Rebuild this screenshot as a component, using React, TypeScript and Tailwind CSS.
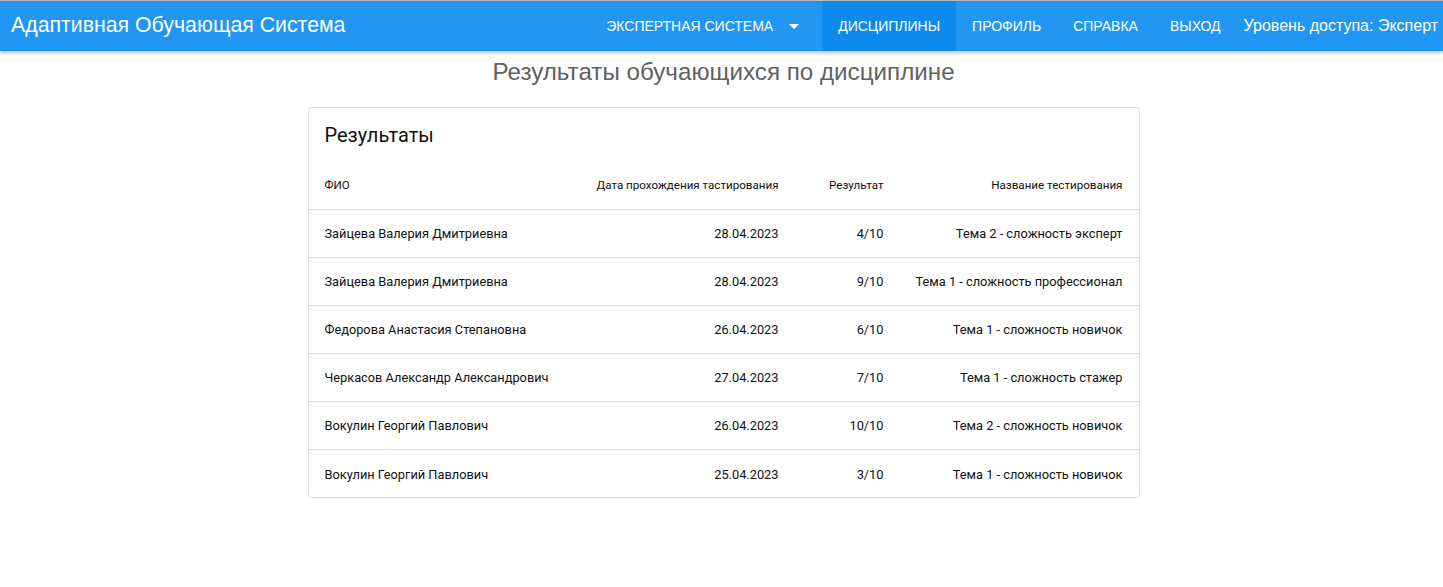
const rows = [
  { name: 'Зайцева Валерия Дмитриевна', date: '28.04.2023', result: '4/10', test: 'Тема 2 - сложность эксперт' },
  { name: 'Зайцева Валерия Дмитриевна', date: '28.04.2023', result: '9/10', test: 'Тема 1 - сложность профессионал' },
  { name: 'Федорова Анастасия Степановна', date: '26.04.2023', result: '6/10', test: 'Тема 1 - сложность новичок' },
  { name: 'Черкасов Александр Александрович', date: '27.04.2023', result: '7/10', test: 'Тема 1 - сложность стажер' },
  { name: 'Вокулин Георгий Павлович', date: '26.04.2023', result: '10/10', test: 'Тема 2 - сложность новичок' },
  { name: 'Вокулин Георгий Павлович', date: '25.04.2023', result: '3/10', test: 'Тема 1 - сложность новичок' },
];

const navItems = ['Профиль', 'Справка', 'Выход'];

export default function App() {
  return (
    <div className="min-h-[587px] bg-white font-['Liberation_Sans',Arial,sans-serif]">
      <header className="relative z-10 flex h-[51px] items-stretch border-t border-[#b9b9b9] bg-[#2196f3] text-white shadow-[0_2px_4px_rgba(0,0,0,0.25)]">
        <div className="flex flex-1 items-center pl-[11px] text-[21.3px]">Адаптивная Обучающая Система</div>
        <nav className="flex items-stretch text-[14px]">
          <div className="flex items-center gap-[16px] pl-[16px] pr-[23px] uppercase">
            <span>Экспертная система</span>
            <svg width="10" height="5" viewBox="0 0 10 5" className="fill-white">
              <path d="M0 0h10L5 5z" />
            </svg>
          </div>
          <div className="flex items-center bg-[#0d8aee] px-[16px] uppercase">Дисциплины</div>
          {navItems.map((item) => (
            <div key={item} className="flex items-center px-[16px] uppercase">
              {item}
            </div>
          ))}
        </nav>
        <div className="flex items-center pl-[7px] pr-[5px] text-[16px]">Уровень доступа: Эксперт</div>
      </header>

      <main className="ml-[4px] flex flex-col items-center">
        <h1 className="mt-[6px] text-[24.2px] leading-[30px] text-[#616161]">Результаты обучающихся по дисциплине</h1>

        <div className="mt-[20px] w-[832px] rounded-[4px] border border-[#dddddd] font-['Roboto',sans-serif] text-[#111]">
          <div className="px-[16px] pt-[15px] pb-[14px] text-[20px] leading-[24px]">Результаты</div>
          <table className="w-full table-fixed border-collapse text-[12.8px]">
            <colgroup>
              <col className="w-[272px]" />
              <col className="w-[214px]" />
              <col className="w-[105px]" />
              <col />
            </colgroup>
            <thead>
              <tr className="h-[48px] border-b border-[#e0e0e0] text-[11.6px]">
                <th className="pl-[16px] pt-[2px] text-left font-normal">ФИО</th>
                <th className="pr-[16px] pt-[2px] text-right font-normal">Дата прохождения тастирования</th>
                <th className="pr-[16px] pt-[2px] text-right font-normal">Результат</th>
                <th className="pr-[16px] pt-[2px] text-right font-normal">Название тестирования</th>
              </tr>
            </thead>
            <tbody>
              {rows.map((r, i) => (
                <tr key={i} className={`h-[48px] ${i < rows.length - 1 ? 'border-b border-[#e0e0e0]' : ''}`}>
                  <td className="pl-[16px] pt-[2px] text-left">{r.name}</td>
                  <td className="pr-[16px] pt-[2px] text-right">{r.date}</td>
                  <td className="pr-[16px] pt-[2px] text-right">{r.result}</td>
                  <td className="pr-[16px] pt-[2px] text-right">{r.test}</td>
                </tr>
              ))}
            </tbody>
          </table>
        </div>
      </main>
    </div>
  );
}
